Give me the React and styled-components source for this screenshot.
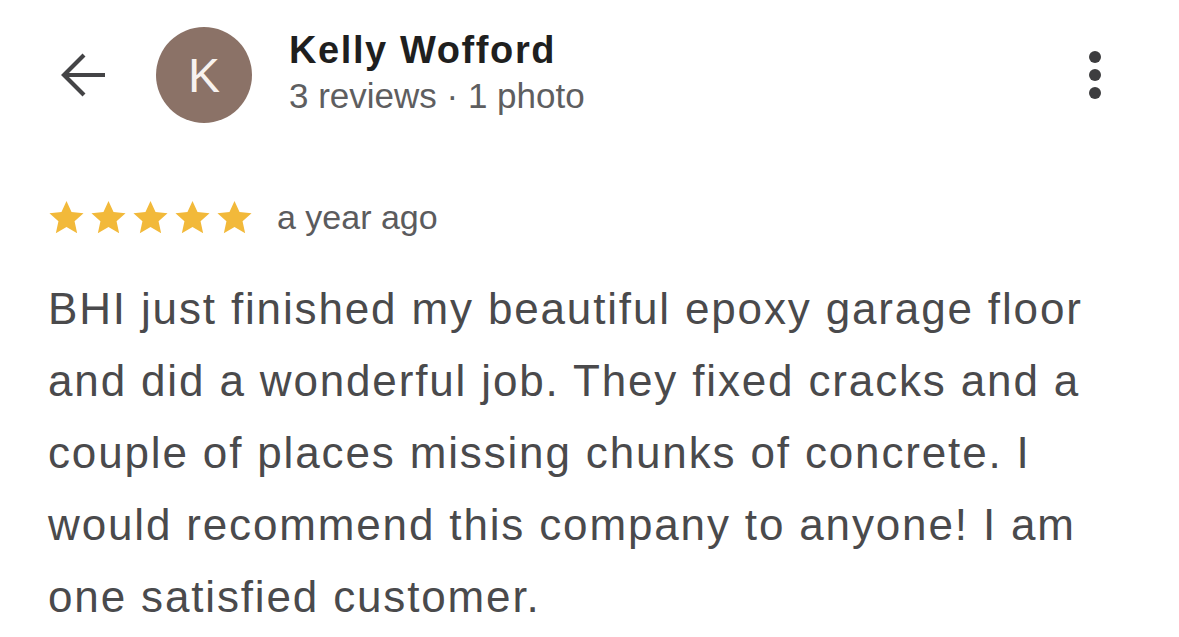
import React from "react";
import styled, { createGlobalStyle } from "styled-components";

const Global = createGlobalStyle`
  html, body { margin: 0; padding: 0; background: #ffffff; }
  body { font-family: "Liberation Sans", Arial, Helvetica, sans-serif; }
  * { box-sizing: border-box; }
`;

const Page = styled.div`
  width: 1179px;
  height: 637px;
  overflow: hidden;
  background: #ffffff;
  padding: 27px 0 0 0;
`;

const Header = styled.header`
  display: flex;
  align-items: center;
  height: 96px;
  padding-left: 59px;
  padding-right: 77px;
`;

const BackButton = styled.button`
  border: 0;
  background: none;
  padding: 0;
  width: 48px;
  height: 48px;
  display: flex;
  align-items: center;
  justify-content: center;
  margin-right: 49px;
  color: #444446;
`;

const Avatar = styled.div`
  width: 96px;
  height: 96px;
  border-radius: 50%;
  background: #8b7267;
  color: #f7f2ef;
  display: flex;
  align-items: center;
  justify-content: center;
  font-size: 48px;
  font-weight: 400;
  flex-shrink: 0;
  margin-right: 37px;
  padding-top: 1px;
`;

const Identity = styled.div`
  display: flex;
  flex-direction: column;
  flex: 1;
  align-self: flex-start;
  margin-top: 1px;
`;

const Name = styled.div`
  font-size: 38px;
  letter-spacing: 1.6px;
  font-weight: 700;
  color: #1f1f1f;
  line-height: 44px;
`;

const Meta = styled.div`
  font-size: 35px;
  color: #5e5e60;
  line-height: 40px;
  margin-top: 4px;
`;

const MoreButton = styled.button`
  border: 0;
  background: none;
  padding: 0;
  width: 14px;
  display: flex;
  flex-direction: column;
  gap: 6px;
  align-items: center;
`;

const Dot = styled.span`
  width: 12px;
  height: 12px;
  border-radius: 50%;
  background: #3d3d3f;
`;

const RatingRow = styled.div`
  display: flex;
  align-items: center;
  margin-top: 76px;
  padding-left: 48px;
  height: 36px;
`;

const Stars = styled.div`
  display: flex;
  gap: 5px;
  margin-right: 24px;
`;

const When = styled.span`
  font-size: 34px;
  color: #5b5b5d;
  line-height: 36px;
`;

const Body = styled.p`
  margin: 38px 0 0 0;
  padding-left: 48px;
  font-size: 44px;
  letter-spacing: 1.85px;
  line-height: 72px;
  color: #4a4a4c;
  white-space: nowrap;
`;

const Star = () => (
  <svg width="37" height="35" viewBox="0 0 24 23">
    <path
      d="M12 0.6l3.3 7.3 7.9 0.8-5.9 5.3 1.7 7.8L12 17.8l-7 4 1.7-7.8L0.8 8.7l7.9-0.8z"
      fill="#f2b93a"
    />
  </svg>
);

export default function App() {
  return (
    <>
      <Global />
      <Page>
        <Header>
          <BackButton aria-label="Back">
            <svg width="48" height="48" viewBox="0 0 48 48" fill="none">
              <path
                d="M46 24H5M25 4L5 24l20 20"
                stroke="currentColor"
                strokeWidth="4.2"
                strokeLinecap="butt"
                strokeLinejoin="miter"
              />
            </svg>
          </BackButton>
          <Avatar>K</Avatar>
          <Identity>
            <Name>Kelly Wofford</Name>
            <Meta>3 reviews · 1 photo</Meta>
          </Identity>
          <MoreButton aria-label="More">
            <Dot />
            <Dot />
            <Dot />
          </MoreButton>
        </Header>
        <RatingRow>
          <Stars>
            <Star />
            <Star />
            <Star />
            <Star />
            <Star />
          </Stars>
          <When>a year ago</When>
        </RatingRow>
        <Body>
          BHI just finished my beautiful epoxy garage floor
          <br />
          and did a wonderful job. They fixed cracks and a
          <br />
          couple of places missing chunks of concrete. I
          <br />
          would recommend this company to anyone! I am
          <br />
          one satisfied customer.
        </Body>
      </Page>
    </>
  );
}
